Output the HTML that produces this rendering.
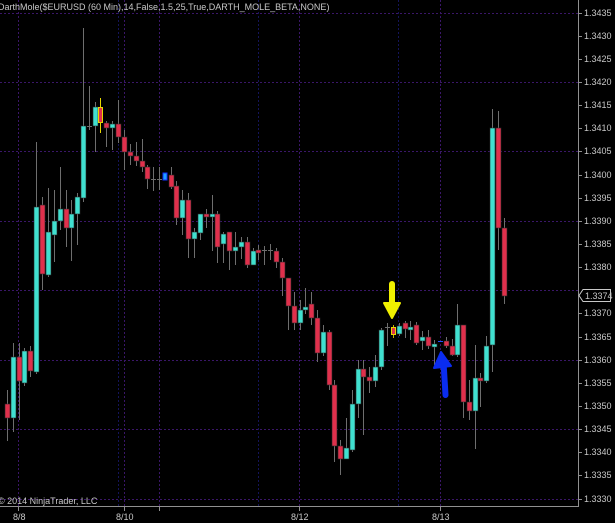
<!DOCTYPE html>
<html><head><meta charset="utf-8"><style>
html,body{margin:0;padding:0;background:#000;width:615px;height:523px;overflow:hidden}
svg{display:block}
text{font-family:"Liberation Sans",sans-serif;font-size:9px;fill:#c8c8c8}
</style></head><body>
<svg width="615" height="523" viewBox="0 0 615 523" xmlns="http://www.w3.org/2000/svg">
<rect width="615" height="523" fill="#000"/>
<g stroke="#3a1668" stroke-width="1" stroke-dasharray="2,2">
<line x1="0" y1="13.5" x2="578" y2="13.5"/>
<line x1="0" y1="82.5" x2="578" y2="82.5"/>
<line x1="0" y1="151.5" x2="578" y2="151.5"/>
<line x1="0" y1="221.5" x2="578" y2="221.5"/>
<line x1="0" y1="290.5" x2="578" y2="290.5"/>
<line x1="0" y1="360.5" x2="578" y2="360.5"/>
<line x1="0" y1="429.5" x2="578" y2="429.5"/>
<line x1="0" y1="499.5" x2="578" y2="499.5"/>
<line x1="18.5" y1="0" x2="18.5" y2="506"/>
<line x1="124.5" y1="0" x2="124.5" y2="506"/>
<line x1="159.5" y1="0" x2="159.5" y2="506"/>
<line x1="299.5" y1="0" x2="299.5" y2="506"/>
<line x1="440.5" y1="0" x2="440.5" y2="506"/>
</g>
<g stroke="#14145a" stroke-width="1" stroke-dasharray="2,2">
<line x1="118.5" y1="0" x2="118.5" y2="506"/>
<line x1="258.5" y1="0" x2="258.5" y2="506"/>
<line x1="398.5" y1="0" x2="398.5" y2="506"/>
</g>
<g stroke="#6e6e6e" stroke-width="1" id="wicks">
<line x1="7.5" y1="390" x2="7.5" y2="441"/><line x1="13.5" y1="343" x2="13.5" y2="432"/><line x1="19.5" y1="343" x2="19.5" y2="420"/><line x1="24.5" y1="348" x2="24.5" y2="386"/><line x1="30.5" y1="346" x2="30.5" y2="377"/><line x1="36.5" y1="142" x2="36.5" y2="374"/><line x1="42.5" y1="197" x2="42.5" y2="290"/><line x1="48.5" y1="188" x2="48.5" y2="277"/><line x1="54.5" y1="190" x2="54.5" y2="262"/><line x1="60.5" y1="167" x2="60.5" y2="230"/><line x1="66.5" y1="190" x2="66.5" y2="247"/><line x1="71.5" y1="200" x2="71.5" y2="261"/><line x1="77.5" y1="193" x2="77.5" y2="245"/><line x1="83.5" y1="28" x2="83.5" y2="202"/><line x1="89.5" y1="86" x2="89.5" y2="130"/><line x1="95.5" y1="102" x2="95.5" y2="152"/><line x1="106.5" y1="121" x2="106.5" y2="147"/><line x1="112.5" y1="121" x2="112.5" y2="150"/><line x1="118.5" y1="100" x2="118.5" y2="143"/><line x1="124.5" y1="130" x2="124.5" y2="170"/><line x1="130.5" y1="144" x2="130.5" y2="165"/><line x1="136.5" y1="142" x2="136.5" y2="166"/><line x1="142.5" y1="139" x2="142.5" y2="172"/><line x1="147.5" y1="165" x2="147.5" y2="189"/><line x1="153.5" y1="167" x2="153.5" y2="191"/><line x1="159.5" y1="167" x2="159.5" y2="190"/><line x1="171.5" y1="167" x2="171.5" y2="189"/><line x1="176.5" y1="181" x2="176.5" y2="225"/><line x1="182.5" y1="190" x2="182.5" y2="235"/><line x1="188.5" y1="193" x2="188.5" y2="258"/><line x1="194.5" y1="228" x2="194.5" y2="258"/><line x1="200.5" y1="214" x2="200.5" y2="240"/><line x1="206.5" y1="209" x2="206.5" y2="228"/><line x1="212.5" y1="195" x2="212.5" y2="251"/><line x1="217.5" y1="211" x2="217.5" y2="263"/><line x1="223.5" y1="232" x2="223.5" y2="263"/><line x1="229.5" y1="232" x2="229.5" y2="270"/><line x1="235.5" y1="232" x2="235.5" y2="265"/><line x1="241.5" y1="237" x2="241.5" y2="259"/><line x1="247.5" y1="237" x2="247.5" y2="268"/><line x1="253.5" y1="248" x2="253.5" y2="265"/><line x1="258.5" y1="245" x2="258.5" y2="260"/><line x1="264.5" y1="246" x2="264.5" y2="265"/><line x1="270.5" y1="244" x2="270.5" y2="260"/><line x1="276.5" y1="248" x2="276.5" y2="268"/><line x1="282.5" y1="258" x2="282.5" y2="296"/><line x1="288.5" y1="278" x2="288.5" y2="330"/><line x1="294.5" y1="292" x2="294.5" y2="330"/><line x1="300.5" y1="300" x2="300.5" y2="330"/><line x1="305.5" y1="288" x2="305.5" y2="314"/><line x1="311.5" y1="292" x2="311.5" y2="325"/><line x1="317.5" y1="310" x2="317.5" y2="362"/><line x1="323.5" y1="325" x2="323.5" y2="356"/><line x1="329.5" y1="330" x2="329.5" y2="390"/><line x1="334.5" y1="380" x2="334.5" y2="462"/><line x1="340.5" y1="440" x2="340.5" y2="475"/><line x1="346.5" y1="418" x2="346.5" y2="459"/><line x1="352.5" y1="390" x2="352.5" y2="452"/><line x1="358.5" y1="360" x2="358.5" y2="418"/><line x1="363.5" y1="360" x2="363.5" y2="435"/><line x1="369.5" y1="367" x2="369.5" y2="393"/><line x1="375.5" y1="355" x2="375.5" y2="387"/><line x1="381.5" y1="328" x2="381.5" y2="370"/><line x1="387.5" y1="323" x2="387.5" y2="346"/><line x1="399.5" y1="323" x2="399.5" y2="336"/><line x1="405.5" y1="321" x2="405.5" y2="338"/><line x1="410.5" y1="321" x2="410.5" y2="340"/><line x1="416.5" y1="322" x2="416.5" y2="345"/><line x1="422.5" y1="331" x2="422.5" y2="350"/><line x1="428.5" y1="330" x2="428.5" y2="349"/><line x1="434.5" y1="340" x2="434.5" y2="365"/><line x1="446.5" y1="337" x2="446.5" y2="348"/><line x1="452.5" y1="339" x2="452.5" y2="356"/><line x1="457.5" y1="304" x2="457.5" y2="357"/><line x1="463.5" y1="325" x2="463.5" y2="418"/><line x1="469.5" y1="380" x2="469.5" y2="420"/><line x1="475.5" y1="345" x2="475.5" y2="449"/><line x1="480.5" y1="373" x2="480.5" y2="407"/><line x1="486.5" y1="336" x2="486.5" y2="383"/><line x1="492.5" y1="109" x2="492.5" y2="372"/><line x1="498.5" y1="111" x2="498.5" y2="250"/><line x1="504.5" y1="218" x2="504.5" y2="304"/>
</g>
<line x1="100.5" y1="98" x2="100.5" y2="133" stroke="#e8d800"/>
<line x1="393.5" y1="325" x2="393.5" y2="338" stroke="#c8b000"/>
<g stroke="#6e6e6e" stroke-width="1">
<line x1="87" y1="126.5" x2="92" y2="126.5"/><line x1="151" y1="179.5" x2="156" y2="179.5"/><line x1="157" y1="179.5" x2="162" y2="179.5"/><line x1="262" y1="250.5" x2="267" y2="250.5"/><line x1="268" y1="250.5" x2="273" y2="250.5"/><line x1="385" y1="327.5" x2="390" y2="327.5"/>
</g>
<line x1="438" y1="341.5" x2="443" y2="341.5" stroke="#2050ff"/>
<g fill="#40e0d0" stroke="#2a2a2a" stroke-width="0.6">
<rect x="11" y="357" width="5" height="61"/><rect x="22" y="351" width="5" height="32"/><rect x="34" y="207" width="5" height="165"/><rect x="46" y="232" width="5" height="43"/><rect x="52" y="221" width="5" height="14"/><rect x="58" y="209" width="5" height="12"/><rect x="69" y="214" width="5" height="14"/><rect x="75" y="197" width="5" height="17"/><rect x="81" y="126" width="5" height="72"/><rect x="93" y="107" width="5" height="19"/><rect x="110" y="124" width="5" height="4"/><rect x="180" y="200" width="5" height="18"/><rect x="192" y="232" width="5" height="7"/><rect x="198" y="214" width="5" height="19"/><rect x="210" y="214" width="5" height="3"/><rect x="221" y="234" width="5" height="10"/><rect x="233" y="247" width="5" height="4"/><rect x="239" y="242" width="5" height="5"/><rect x="251" y="251" width="5" height="14"/><rect x="298" y="310" width="5" height="13"/><rect x="303" y="307" width="5" height="3"/><rect x="321" y="332" width="5" height="21"/><rect x="344" y="448" width="5" height="11"/><rect x="350" y="404" width="5" height="46"/><rect x="356" y="369" width="5" height="35"/><rect x="373" y="367" width="5" height="14"/><rect x="379" y="330" width="5" height="37"/><rect x="397" y="326" width="5" height="8"/><rect x="408" y="327" width="5" height="3"/><rect x="420" y="337" width="5" height="4"/><rect x="432" y="344" width="5" height="3"/><rect x="455" y="325" width="5" height="30"/><rect x="473" y="378" width="5" height="33"/><rect x="484" y="346" width="5" height="35"/><rect x="490" y="128" width="5" height="217"/>
</g>
<g fill="#e0304c" stroke="#2a2a2a" stroke-width="0.6">
<rect x="5" y="404" width="5" height="14"/><rect x="17" y="357" width="5" height="24"/><rect x="28" y="351" width="5" height="20"/><rect x="40" y="205" width="5" height="69"/><rect x="64" y="209" width="5" height="19"/><rect x="104" y="123" width="5" height="5"/><rect x="116" y="124" width="5" height="13"/><rect x="122" y="137" width="5" height="15"/><rect x="128" y="152" width="5" height="4"/><rect x="134" y="156" width="5" height="5"/><rect x="140" y="161" width="5" height="6"/><rect x="145" y="167" width="5" height="12"/><rect x="169" y="175" width="5" height="12"/><rect x="174" y="186" width="5" height="32"/><rect x="186" y="200" width="5" height="39"/><rect x="204" y="214" width="5" height="3"/><rect x="215" y="214" width="5" height="33"/><rect x="227" y="232" width="5" height="19"/><rect x="245" y="242" width="5" height="23"/><rect x="256" y="250" width="5" height="3"/><rect x="274" y="251" width="5" height="11"/><rect x="280" y="262" width="5" height="16"/><rect x="286" y="278" width="5" height="28"/><rect x="292" y="306" width="5" height="17"/><rect x="309" y="304" width="5" height="14"/><rect x="315" y="318" width="5" height="35"/><rect x="327" y="332" width="5" height="53"/><rect x="332" y="385" width="5" height="61"/><rect x="338" y="446" width="5" height="13"/><rect x="361" y="369" width="5" height="8"/><rect x="367" y="377" width="5" height="4"/><rect x="403" y="323" width="5" height="6"/><rect x="414" y="325" width="5" height="18"/><rect x="426" y="337" width="5" height="9"/><rect x="444" y="341" width="5" height="5"/><rect x="450" y="346" width="5" height="9"/><rect x="461" y="325" width="5" height="77"/><rect x="467" y="402" width="5" height="9"/><rect x="478" y="378" width="5" height="3"/><rect x="496" y="128" width="5" height="100"/><rect x="502" y="228" width="5" height="68"/>
</g>
<rect x="98.5" y="107.5" width="4" height="15" fill="#e0304c" stroke="#e8d800" stroke-width="1"/>
<rect x="391.5" y="327.5" width="4" height="7" fill="#e0304c" stroke="#e8d800" stroke-width="1"/>
<rect x="163" y="173" width="4" height="7" fill="#20a0ff" stroke="#1030ff" stroke-width="1"/>
<!-- arrows -->
<line x1="392" y1="284" x2="392" y2="306" stroke="#f0f000" stroke-width="6" stroke-linecap="round"/>
<polygon points="384,303 400,303 392,318" fill="#f0f000" stroke="#f0f000" stroke-width="2" stroke-linejoin="round"/>
<line x1="443.5" y1="362" x2="445.5" y2="395" stroke="#0a2cf0" stroke-width="6" stroke-linecap="round"/>
<polygon points="441,352 434,368 451,366" fill="#0a2cf0" stroke="#0a2cf0" stroke-width="2" stroke-linejoin="round"/>
<!-- axes -->
<line x1="578.5" y1="0" x2="578.5" y2="507" stroke="#909090"/>
<line x1="0" y1="506.5" x2="579" y2="506.5" stroke="#909090"/>
<g stroke="#909090">
<line x1="18.5" y1="506" x2="18.5" y2="511"/><line x1="124.5" y1="506" x2="124.5" y2="511"/><line x1="159.5" y1="506" x2="159.5" y2="511"/><line x1="299.5" y1="506" x2="299.5" y2="511"/><line x1="440.5" y1="506" x2="440.5" y2="511"/>
<line x1="578" y1="13.5" x2="582" y2="13.5"/><line x1="578" y1="36.5" x2="582" y2="36.5"/><line x1="578" y1="59.5" x2="582" y2="59.5"/><line x1="578" y1="82.5" x2="582" y2="82.5"/><line x1="578" y1="105.5" x2="582" y2="105.5"/><line x1="578" y1="128.5" x2="582" y2="128.5"/><line x1="578" y1="151.5" x2="582" y2="151.5"/><line x1="578" y1="175.5" x2="582" y2="175.5"/><line x1="578" y1="198.5" x2="582" y2="198.5"/><line x1="578" y1="221.5" x2="582" y2="221.5"/><line x1="578" y1="244.5" x2="582" y2="244.5"/><line x1="578" y1="267.5" x2="582" y2="267.5"/><line x1="578" y1="313.5" x2="582" y2="313.5"/><line x1="578" y1="337.5" x2="582" y2="337.5"/><line x1="578" y1="360.5" x2="582" y2="360.5"/><line x1="578" y1="383.5" x2="582" y2="383.5"/><line x1="578" y1="406.5" x2="582" y2="406.5"/><line x1="578" y1="429.5" x2="582" y2="429.5"/><line x1="578" y1="452.5" x2="582" y2="452.5"/><line x1="578" y1="475.5" x2="582" y2="475.5"/><line x1="578" y1="499.5" x2="582" y2="499.5"/>
</g>
<g>
<text x="584" y="16">1.3435</text><text x="584" y="39">1.3430</text><text x="584" y="62">1.3425</text><text x="584" y="85">1.3420</text><text x="584" y="108">1.3415</text><text x="584" y="131">1.3410</text><text x="584" y="154">1.3405</text><text x="584" y="178">1.3400</text><text x="584" y="201">1.3395</text><text x="584" y="224">1.3390</text><text x="584" y="247">1.3385</text><text x="584" y="270">1.3380</text><text x="584" y="316">1.3370</text><text x="584" y="340">1.3365</text><text x="584" y="363">1.3360</text><text x="584" y="386">1.3355</text><text x="584" y="409">1.3350</text><text x="584" y="432">1.3345</text><text x="584" y="455">1.3340</text><text x="584" y="478">1.3335</text><text x="584" y="502">1.3330</text>
</g>
<polygon points="579,295.5 583,289.5 610.5,289.5 610.5,301.5 583,301.5" fill="#000" stroke="#c8c8c8" stroke-width="1"/>
<text x="585" y="299">1.3374</text>
<text x="13" y="520">8/8</text><text x="116" y="520">8/10</text><text x="291" y="520">8/12</text><text x="432" y="520">8/13</text>
<text x="-2" y="10">DarthMole($EURUSD (60 Min),14,False,1.5,25,True,DARTH_MOLE_BETA,NONE)</text>
<text x="-2" y="504">© 2014 NinjaTrader, LLC</text>
</svg>
</body></html>
